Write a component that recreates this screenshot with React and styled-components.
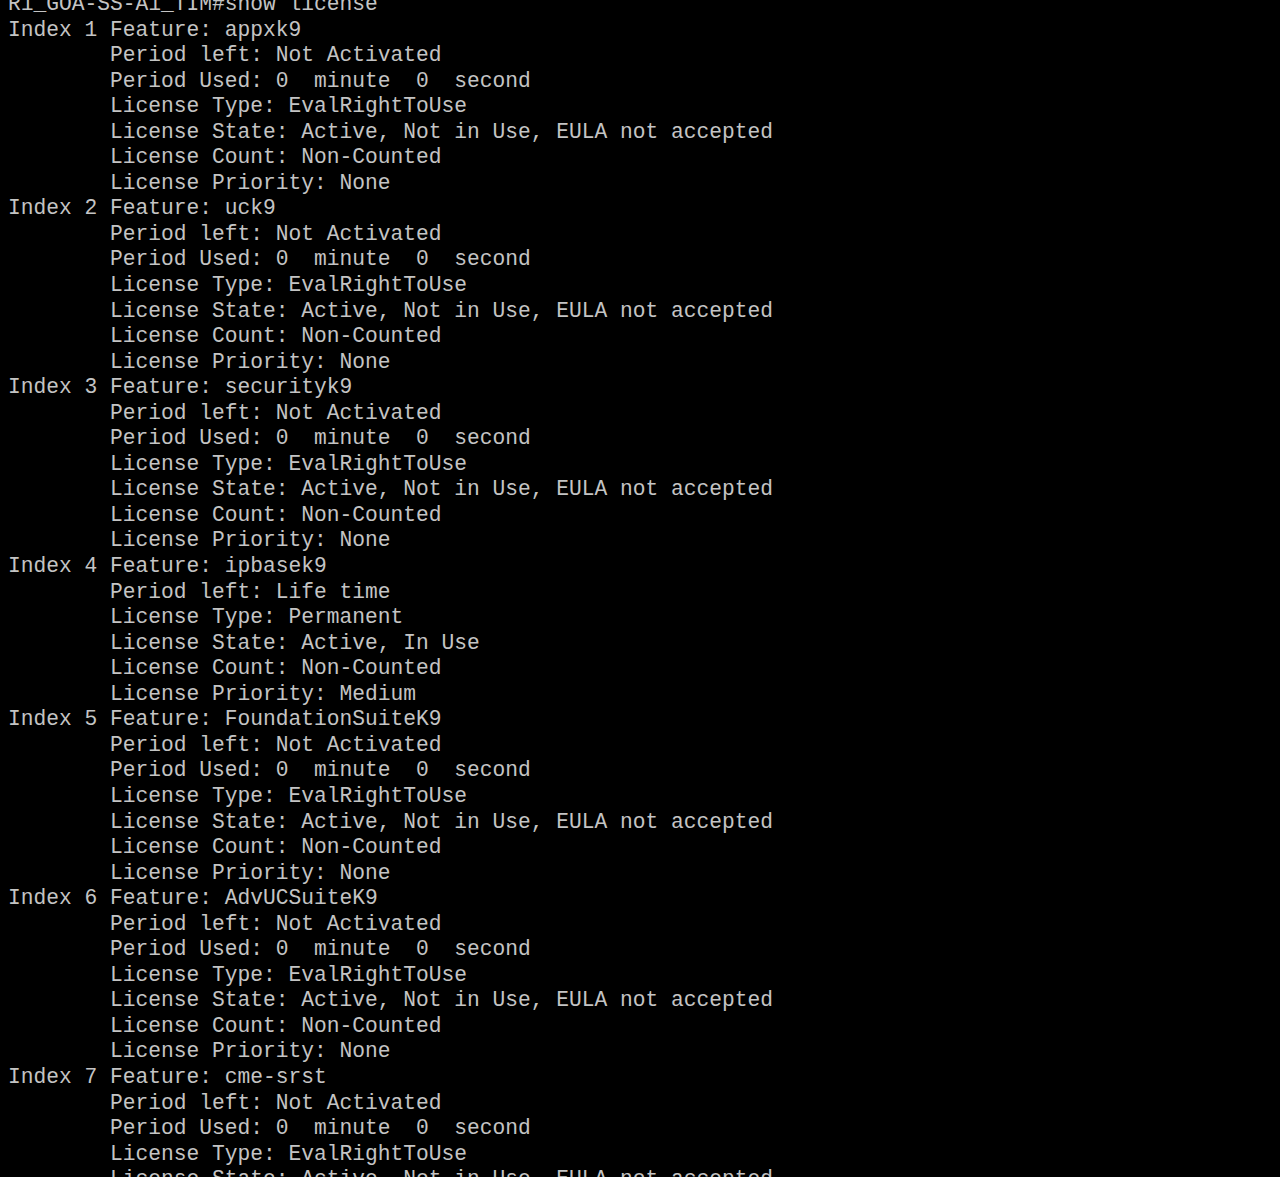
import styled, { createGlobalStyle } from "styled-components";

const GlobalStyle = createGlobalStyle`
  html, body {
    margin: 0;
    padding: 0;
    background: #000;
  }
`;

const Screen = styled.div`
  width: 1280px;
  height: 1177px;
  overflow: hidden;
  background: #000;
  padding-left: 8px;
  box-sizing: border-box;
`;

const Output = styled.div`
  margin-top: -8px;
  font-family: "Liberation Mono", "Courier New", monospace;
  font-size: 21.25px;
  line-height: 25.55px;
  color: #c4c4c4;
`;

const Line = styled.div`
  white-space: pre;
  padding-left: ${(p) => (p.$indent ? "8ch" : "0")};
`;

const evalLines = [
  "Period left: Not Activated",
  "Period Used: 0  minute  0  second",
  "License Type: EvalRightToUse",
  "License State: Active, Not in Use, EULA not accepted",
  "License Count: Non-Counted",
  "License Priority: None",
];

const features = [
  { name: "appxk9", lines: evalLines },
  { name: "uck9", lines: evalLines },
  { name: "securityk9", lines: evalLines },
  {
    name: "ipbasek9",
    lines: [
      "Period left: Life time",
      "License Type: Permanent",
      "License State: Active, In Use",
      "License Count: Non-Counted",
      "License Priority: Medium",
    ],
  },
  { name: "FoundationSuiteK9", lines: evalLines },
  { name: "AdvUCSuiteK9", lines: evalLines },
  { name: "cme-srst", lines: evalLines },
];

export default function App() {
  return (
    <>
      <GlobalStyle />
      <Screen>
        <Output>
          <Line>R1_GOA-SS-A1_TIM#show license</Line>
          {features.map((f, i) => (
            <div key={f.name}>
              <Line>{`Index ${i + 1} Feature: ${f.name}`}</Line>
              {f.lines.map((l, j) => (
                <Line $indent key={j}>
                  {l}
                </Line>
              ))}
            </div>
          ))}
        </Output>
      </Screen>
    </>
  );
}
